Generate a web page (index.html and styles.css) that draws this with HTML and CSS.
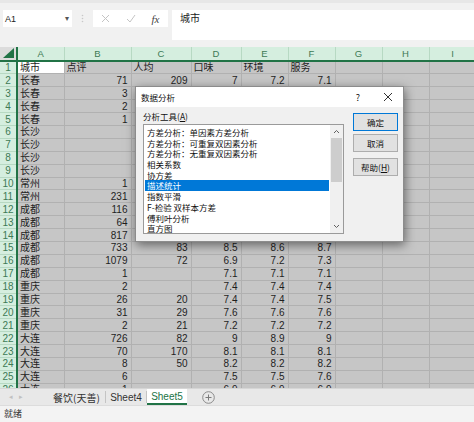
FILE: index.html
```html
<!DOCTYPE html>
<html>
<head>
<meta charset="utf-8">
<link rel="stylesheet" href="styles.css">
</head>
<body>
<div class="toolbar">
  <div class="namebox"><span>A1</span><span class="caret">▾</span></div>
  <div class="grip"><svg width="3" height="9" viewBox="0 0 3 9"><circle cx="1.5" cy="1.5" r="0.8" fill="#c8c8c8"/><circle cx="1.5" cy="4.5" r="0.8" fill="#c8c8c8"/><circle cx="1.5" cy="7.5" r="0.8" fill="#c8c8c8"/></svg></div>
  <div class="fnbox">
    <span class="fi"><svg width="9" height="9" viewBox="0 0 9 9"><path d="M1 1L8 8M8 1L1 8" stroke="#c4c4c4" stroke-width="1"/></svg></span>
    <span class="fi"><svg width="10" height="9" viewBox="0 0 10 9"><path d="M1 5L4 8L9 1" stroke="#c4c4c4" stroke-width="1" fill="none"/></svg></span>
    <span class="fi fx">fx</span>
  </div>
  <div class="formula">城市</div>
</div>
<div class="sheet">
<table class="grid">
<colgroup><col class="c-h"><col class="c-a"><col class="c-b"><col class="c-c"><col class="c-d"><col class="c-e"><col class="c-e"><col class="c-e"><col class="c-e"><col class="c-e"></colgroup>
<thead><tr><th class="corner"><svg width="12" height="11" viewBox="0 0 12 11"><path d="M11 0L11 10L0 10Z" fill="#217346"/></svg></th><th>A</th><th>B</th><th>C</th><th>D</th><th>E</th><th>F</th><th>G</th><th>H</th><th>I</th></tr></thead>
<tbody>
<tr><th>1</th><td class="active">城市</td><td>点评</td><td>人均</td><td>口味</td><td>环境</td><td>服务</td><td></td><td></td><td></td></tr>
<tr><th>2</th><td>长春</td><td class="n">71</td><td class="n">209</td><td class="n">7</td><td class="n">7.2</td><td class="n">7.1</td><td></td><td></td><td></td></tr>
<tr><th>3</th><td>长春</td><td class="n">3</td><td></td><td></td><td></td><td></td><td></td><td></td><td></td></tr>
<tr><th>4</th><td>长春</td><td class="n">2</td><td></td><td></td><td></td><td></td><td></td><td></td><td></td></tr>
<tr><th>5</th><td>长春</td><td class="n">1</td><td></td><td></td><td></td><td></td><td></td><td></td><td></td></tr>
<tr><th>6</th><td>长沙</td><td></td><td></td><td></td><td></td><td></td><td></td><td></td><td></td></tr>
<tr><th>7</th><td>长沙</td><td></td><td></td><td></td><td></td><td></td><td></td><td></td><td></td></tr>
<tr><th>8</th><td>长沙</td><td></td><td></td><td></td><td></td><td></td><td></td><td></td><td></td></tr>
<tr><th>9</th><td>长沙</td><td></td><td></td><td></td><td></td><td></td><td></td><td></td><td></td></tr>
<tr><th>10</th><td>常州</td><td class="n">1</td><td></td><td></td><td></td><td></td><td></td><td></td><td></td></tr>
<tr><th>11</th><td>常州</td><td class="n">231</td><td></td><td></td><td></td><td></td><td></td><td></td><td></td></tr>
<tr><th>12</th><td>成都</td><td class="n">116</td><td></td><td></td><td></td><td></td><td></td><td></td><td></td></tr>
<tr><th>13</th><td>成都</td><td class="n">64</td><td></td><td></td><td></td><td></td><td></td><td></td><td></td></tr>
<tr><th>14</th><td>成都</td><td class="n">817</td><td></td><td></td><td></td><td></td><td></td><td></td><td></td></tr>
<tr><th>15</th><td>成都</td><td class="n">733</td><td class="n">83</td><td class="n">8.5</td><td class="n">8.6</td><td class="n">8.7</td><td></td><td></td><td></td></tr>
<tr><th>16</th><td>成都</td><td class="n">1079</td><td class="n">72</td><td class="n">6.9</td><td class="n">7.2</td><td class="n">7.3</td><td></td><td></td><td></td></tr>
<tr><th>17</th><td>成都</td><td class="n">1</td><td></td><td class="n">7.1</td><td class="n">7.1</td><td class="n">7.1</td><td></td><td></td><td></td></tr>
<tr><th>18</th><td>重庆</td><td class="n">2</td><td></td><td class="n">7.4</td><td class="n">7.4</td><td class="n">7.4</td><td></td><td></td><td></td></tr>
<tr><th>19</th><td>重庆</td><td class="n">26</td><td class="n">20</td><td class="n">7.4</td><td class="n">7.4</td><td class="n">7.5</td><td></td><td></td><td></td></tr>
<tr><th>20</th><td>重庆</td><td class="n">31</td><td class="n">29</td><td class="n">7.6</td><td class="n">7.6</td><td class="n">7.6</td><td></td><td></td><td></td></tr>
<tr><th>21</th><td>重庆</td><td class="n">2</td><td class="n">21</td><td class="n">7.2</td><td class="n">7.2</td><td class="n">7.2</td><td></td><td></td><td></td></tr>
<tr><th>22</th><td>大连</td><td class="n">726</td><td class="n">82</td><td class="n">9</td><td class="n">8.9</td><td class="n">9</td><td></td><td></td><td></td></tr>
<tr><th>23</th><td>大连</td><td class="n">70</td><td class="n">170</td><td class="n">8.1</td><td class="n">8.1</td><td class="n">8.1</td><td></td><td></td><td></td></tr>
<tr><th>24</th><td>大连</td><td class="n">8</td><td class="n">50</td><td class="n">8.2</td><td class="n">8.2</td><td class="n">8.2</td><td></td><td></td><td></td></tr>
<tr><th>25</th><td>大连</td><td class="n">6</td><td></td><td class="n">7.5</td><td class="n">7.5</td><td class="n">7.6</td><td></td><td></td><td></td></tr>
<tr><th>26</th><td>大连</td><td class="n">1</td><td></td><td class="n">6.9</td><td class="n">6.9</td><td class="n">6.9</td><td></td><td></td><td></td></tr>
</tbody>
</table>
</div>
<div class="tabs">
  <div class="nav"><span>◂</span><span>▸</span></div>
  <div class="tab t1">餐饮(天善)</div>
  <div class="tab t2">Sheet4</div>
  <div class="tab active">Sheet5</div>
  <div class="plus"><svg width="13" height="13" viewBox="0 0 13 13"><circle cx="6.5" cy="6.5" r="5.8" fill="none" stroke="#8a8a8a" stroke-width="1"/><path d="M6.5 3.5V9.5M3.5 6.5H9.5" stroke="#7a7a7a" stroke-width="1"/></svg></div>
</div>
<div class="status">就绪</div>

<div class="dialog">
  <div class="dtitle">
    <span class="dt">数据分析</span>
    <span class="q">?</span>
    <span class="x"><svg width="10" height="10" viewBox="0 0 10 10"><path d="M1 1L9 9M9 1L1 9" stroke="#333" stroke-width="1"/></svg></span>
  </div>
  <div class="dbody">
    <div class="dleft">
      <div class="lbl">分析工具(<u>A</u>)</div>
      <div class="list">
        <div class="items">
          <div class="item">方差分析：单因素方差分析</div>
          <div class="item">方差分析：可重复双因素分析</div>
          <div class="item">方差分析：无重复双因素分析</div>
          <div class="item">相关系数</div>
          <div class="item">协方差</div>
          <div class="item sel">描述统计</div>
          <div class="item">指数平滑</div>
          <div class="item">F-检验 双样本方差</div>
          <div class="item">傅利叶分析</div>
          <div class="item">直方图</div>
        </div>
        <div class="scroll">
          <div class="arr"><svg width="7" height="5" viewBox="0 0 7 5"><path d="M1 4L3.5 1.5L6 4" stroke="#606060" fill="none" stroke-width="1"/></svg></div>
          <div class="thumb"></div>
          <div class="track"></div>
          <div class="arr"><svg width="7" height="5" viewBox="0 0 7 5"><path d="M1 1L3.5 3.5L6 1" stroke="#606060" fill="none" stroke-width="1"/></svg></div>
        </div>
      </div>
    </div>
    <div class="dright">
      <div class="btn def">确定</div>
      <div class="btn">取消</div>
      <div class="btn help">帮助(<u>H</u>)</div>
    </div>
  </div>
</div>
</body>
</html>
```
FILE: styles.css
```css
*{box-sizing:border-box;margin:0;padding:0}
body{width:474px;height:422px;overflow:hidden;position:relative;background:#f0f0f0;color:#1e1e1e;font-family:"Liberation Sans","Noto Sans CJK SC",sans-serif}
.toolbar{height:47px;display:flex;align-items:flex-start;padding-top:7px;background:#f1f1f1;border-top:3px solid #e7e7e7}
.namebox{margin-left:3px;width:69px;height:17px;background:#fff;display:flex;align-items:center;justify-content:space-between;padding:0 3px 0 2px;font-size:9px;color:#222}
.caret{font-size:8px;color:#555}
.grip{width:21px;height:17px;display:flex;align-items:center;justify-content:center}
.fnbox{width:75px;height:17px;background:#fff;display:flex;align-items:center}
.fi{width:25px;display:flex;justify-content:center;align-items:center}
.fx{font-family:"Liberation Serif",serif;font-style:italic;font-size:11px;color:#444}
.formula{margin-left:4px;flex:1;height:30px;background:#fff;padding:0 8px;font-size:10px;line-height:15px;font-family:"Noto Sans CJK SC",sans-serif;color:#222}
.sheet{height:341px;overflow:hidden;background:#c6c6c6}
.grid{border-collapse:collapse;table-layout:fixed;width:476px;font-size:10px}
.c-h{width:17px}.c-a{width:47px}.c-b{width:67px}.c-c{width:60px}.c-d{width:50px}.c-e{width:47px}
.grid thead th{height:14px;background:#d5eedf;color:#3d7a55;font-weight:normal;font-size:9.5px;border-right:1px solid #b7d9c3;border-bottom:2px solid #217346;line-height:12px;text-align:center}
.grid thead th.corner{background:#dcdcdc;border-right:2px solid #217346;padding:0;vertical-align:bottom;text-align:right}
.corner svg{display:block;margin:0 1px 1px auto}
.grid tbody tr{height:12.9px}
.grid tbody th{background:#d5eedf;color:#3d7a55;font-weight:normal;font-size:10px;border-right:2px solid #217346;border-bottom:1px solid #b7d9c3;text-align:center;line-height:11px;padding:0}
.grid td{background:#c6c6c6;border:1px solid #b1b1b1;padding:0 2px;white-space:nowrap;overflow:hidden;line-height:11px;color:#1e1e1e}
.grid td.n{text-align:right;padding-right:3px}
.grid td.active{background:#fff}
.tabs{height:17px;background:#e8e8e8;display:flex;font-size:10px;color:#333;border-top:1px solid #d6d6d6}
.nav{width:48px;display:flex;gap:6px;padding-left:9px;align-items:center;color:#c0c0c0;font-size:7px}
.tab{display:flex;align-items:center;justify-content:center;border-right:1px solid #c4c4c4;margin:2px 0}
.t1{width:58px;font-family:"Noto Sans CJK SC",sans-serif}
.t2{width:41px}
.tab.active{width:40px;margin:0;background:#fff;color:#217346;border-bottom:2px solid #217346;border-right:none}
.plus{margin-left:15px;display:flex;align-items:center}
.status{height:17px;background:#f3f3f3;border-top:1px solid #dcdcdc;font-size:9px;line-height:15px;padding-left:4px;font-family:"Noto Sans CJK SC",sans-serif;color:#333}
.dialog{position:absolute;left:135px;top:86px;width:269px;height:156px;background:#f0f0f0;border:1px solid #8c8c8c;box-shadow:1px 3px 10px rgba(0,0,0,.5);font-family:"Noto Sans CJK SC","Liberation Sans",sans-serif;font-size:8.5px;color:#111}
.dtitle{height:20px;background:#fff;display:flex;align-items:center;padding-left:5px}
.dt{flex:1}
.q{width:30px;text-align:center;font-size:9px}
.x{width:30px;display:flex;justify-content:center}
.dbody{display:flex;padding-left:7px}
.dleft{width:201px}
.lbl{padding-top:3px;line-height:12px;height:17px}
.list{height:110px;border:1px solid #9a9a9a;background:#fff;display:flex}
.items{flex:1;padding:2px 1px 0 1px}
.item{height:10.7px;line-height:10.7px;padding-left:2px;white-space:nowrap}
.item.sel{background:#0078d7;color:#fff}
.scroll{width:13px;background:#f0f0f0;display:flex;flex-direction:column;align-items:stretch}
.arr{height:13px;display:flex;justify-content:center;align-items:center}
.thumb{height:44px;background:#cdcdcd;margin:0 1px}
.track{flex:1}
.dright{margin-left:9px;padding-top:6px}
.btn{width:45px;height:18px;border:1px solid #adadad;background:#e1e1e1;display:flex;align-items:center;justify-content:center;margin-bottom:3px}
.btn.def{border-color:#0078d7}
.btn.help{margin-top:6px}
```
